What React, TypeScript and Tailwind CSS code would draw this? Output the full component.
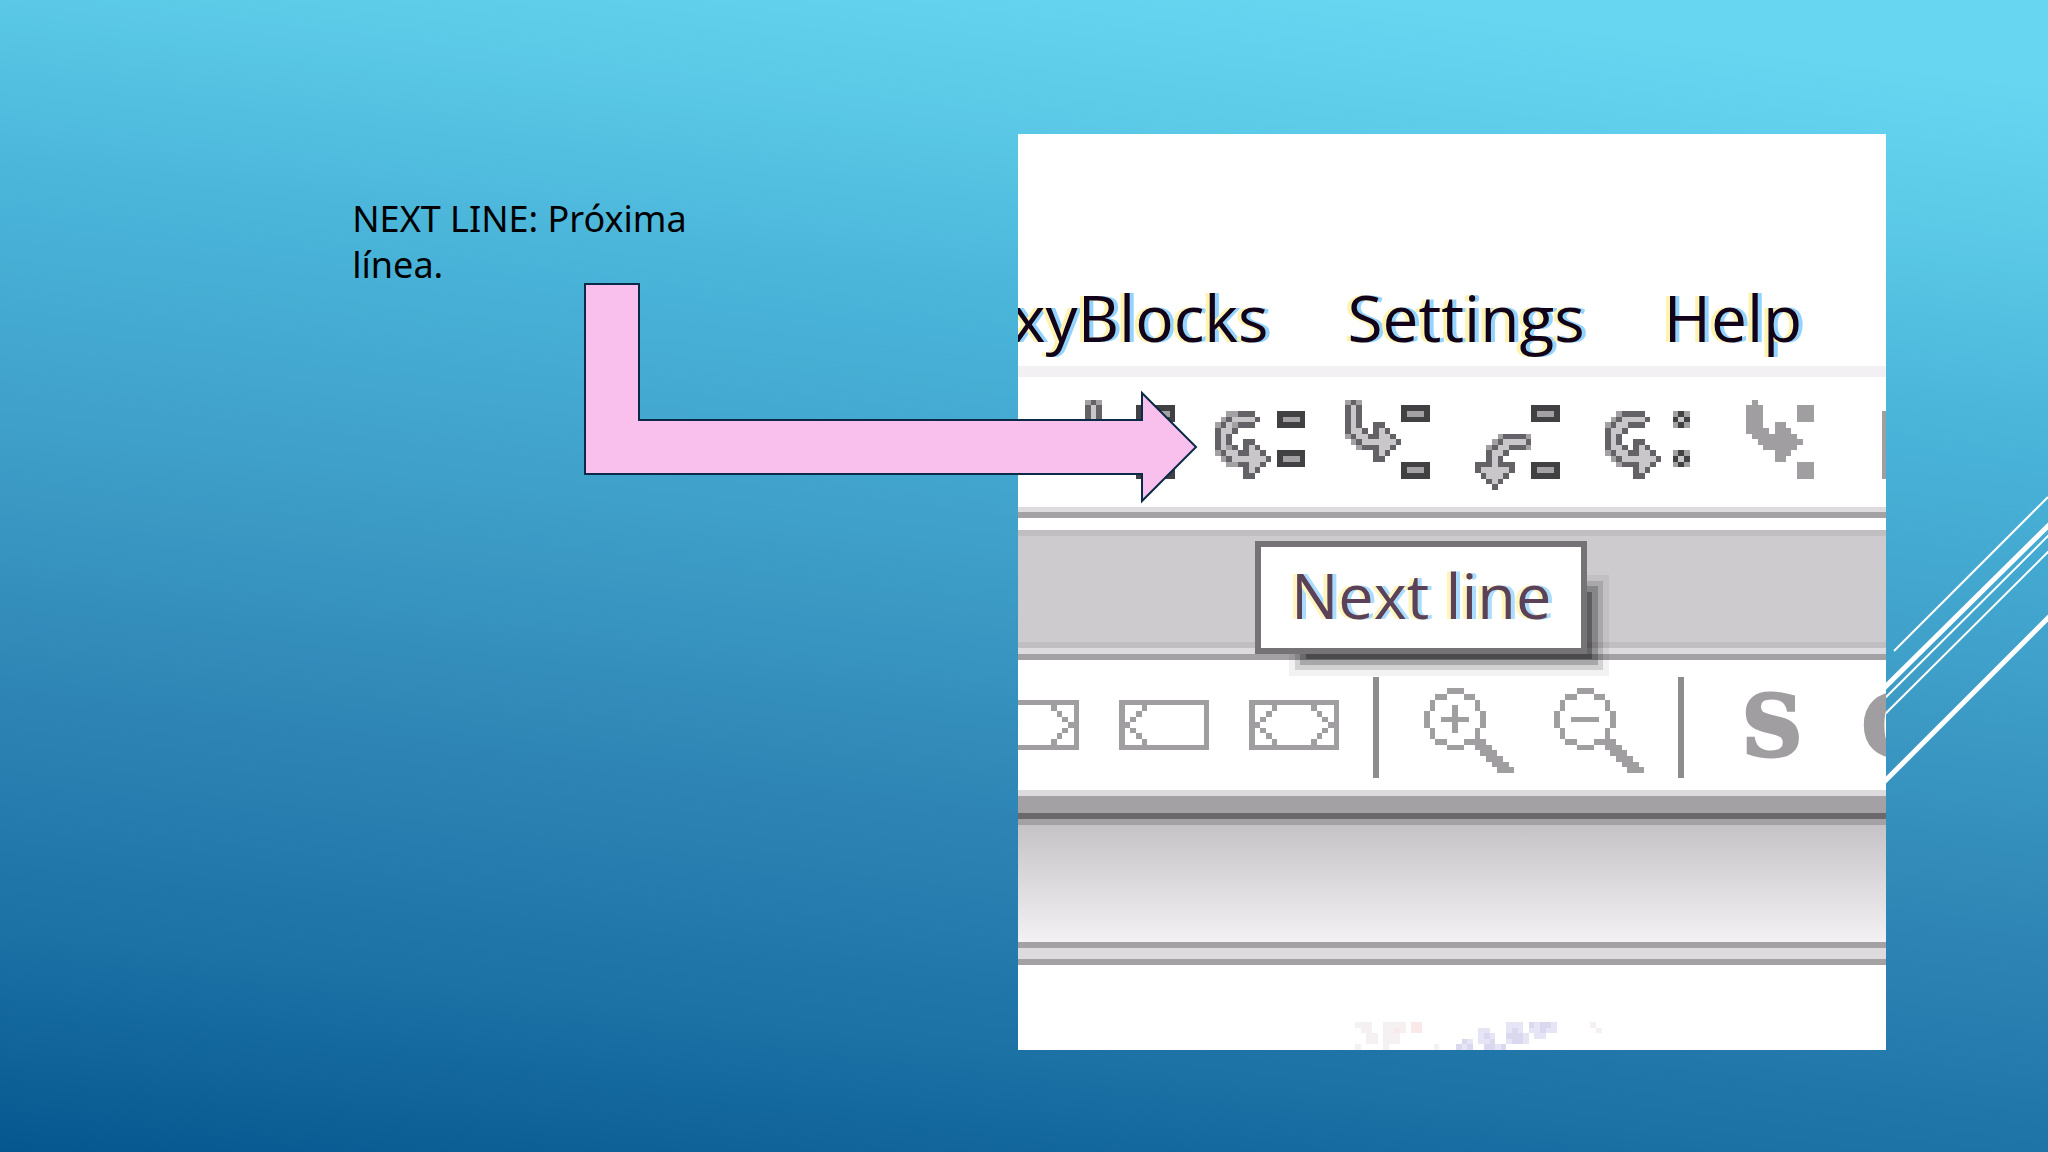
import type { ReactNode } from 'react';

// One character is one pixel of the enlarged toolbar bitmaps
const COLORS: Record<string, string> = {
  D: '#646266',
  L: '#c9c7ca',
  m: '#a3a1a4',
  K: '#414043',
  g: '#a09ea1',
  a: '#f5f1f2',
  b: '#fbe9ea',
  c: '#e6e5f5',
  d: '#dad8ee',
};

const STEP_OVER = [
  '..mmDDD....KKKKK',
  '.mDLLLLD...KmmmK',
  'mDLmDDD....KKKKK',
  'DLLD............',
  'DLD.............',
  'DLD..DD.........',
  'DLmD.DLD........',
  'mDLLDDLLD..KKKKK',
  '.mDLLLLLLD.KmmmK',
  '..mmDDLLD..KKKKK',
  '.....DLD........',
  '.....DD.........',
];

const STEP_INTO = [
  'mDm............',
  'DLD.......KKKKK',
  'DLD.......KmmmK',
  'DLD.......KKKKK',
  'DLD..DD........',
  'DLLD.DLD.......',
  'mDLLDDLLD......',
  '.mDLLLLLLD.....',
  '..mDDDLLD......',
  '.....DLD.......',
  '.....DD........',
  '..........KKKKK',
  '..........KmmmK',
  '..........KKKKK',
];

const RUN_TO_CURSOR = [
  'mDm.............',
  'DLD......KKKKKKK',
  'DLD......KmmmmmK',
  'DLD......KKKKKKK',
  'DLD.............',
  'DLD.............',
  'DLD.............',
  'DLD.............',
  'DLD.............',
  'mDm.............',
  '................',
  '.........KKKKKKK',
  '.........KmmmmmK',
  '.........KKKKKKK',
];

const STEP_OUT = [
  '..........KKKKK',
  '..........KmmmK',
  '..........KKKKK',
  '...............',
  '...............',
  '....mDDDDm.....',
  '...mDLLLLD.....',
  '..mDLLDDDm.....',
  '..DLLD.........',
  '..DLD..........',
  'DDDLDDD...KKKKK',
  'DLLLLLD...KmmmK',
  '.DLLLD....KKKKK',
  '..DLD..........',
  '...D...........',
];

const NEXT_INSTRUCTION = [
  '..mDDDD.....mKm',
  '.mDLLLLD....KLK',
  'mDLLDDD.....mKm',
  'DLLD...........',
  'DLD............',
  'DLD..DD........',
  'DLLD.DLD.......',
  'mDLLDDLLD...mKm',
  '.mDLLLLLLD..KLK',
  '..mDDDLLD...mKm',
  '.....DLD.......',
  '.....DD........',
];

const STEP_INTO_INSTRUCTION = [
  '.g..........',
  'ggg......ggg',
  'ggg......ggg',
  'ggg......ggg',
  'ggg..gg.....',
  'gggg.ggg....',
  '.gggggggg...',
  '..gggggggg..',
  '...gggggg...',
  '.....ggg....',
  '.....gg.....',
  '.........ggg',
  '.........ggg',
  '.........ggg',
];

const BREAK = Array(12).fill('gggggggggg') as string[];

const JUMP_FORWARD = [
  'gggggggggggggggg',
  'g..........g...g',
  'g...........g..g',
  'g............g.g',
  'g.............gg',
  'g............g.g',
  'g...........g..g',
  'g..........g...g',
  'gggggggggggggggg',
];

const JUMP_BACK = [
  'gggggggggggggggg',
  'g...g..........g',
  'g..g...........g',
  'g.g............g',
  'gg.............g',
  'g.g............g',
  'g..g...........g',
  'g...g..........g',
  'gggggggggggggggg',
];

const JUMP_BOTH = [
  'gggggggggggggggg',
  'g...g......g...g',
  'g..g........g..g',
  'g.g..........g.g',
  'gg............gg',
  'g.g..........g.g',
  'g..g........g..g',
  'g...g......g...g',
  'gggggggggggggggg',
];

const ZOOM_IN = [
  '....ggg.........',
  '..gg...gg.......',
  '.g.......g......',
  '.g...g...g......',
  'g....g....g.....',
  'g..ggggg..g.....',
  'g....g....g.....',
  '.g...g...g......',
  '.g.......g......',
  '..gg...gggg.....',
  '....ggg..ggg....',
  '..........ggg...',
  '...........ggg..',
  '............ggg.',
  '.............ggg',
];

const ZOOM_OUT = [
  '....ggg.........',
  '..gg...gg.......',
  '.g.......g......',
  '.g.......g......',
  'g.........g.....',
  'g..ggggg..g.....',
  'g.........g.....',
  '.g.......g......',
  '.g.......g......',
  '..gg...gggg.....',
  '....ggg..ggg....',
  '..........ggg...',
  '...........ggg..',
  '............ggg.',
  '.............ggg',
];

const LOGO_TOP = [
  'aaa..aaaa.bb...............ccc.dcddc......a...',
  '.aa..aaba.bb..........cc...cdc.ccdcc.......a..',
  '..aa.aaa..............cdc..dddc.cc............',
  '..aa.aaa...........dc.ccd..cddc...............',
  'a....a........a...dcd..ddcd...................',
];

function Pixels({ rows, x = 0, y = 0 }: { rows: string[]; x?: number; y?: number }) {
  return (
    <>
      {rows.map((row, r) =>
        [...row.matchAll(/([^.])\1*/g)].map((run) => (
          <rect
            key={`${r}-${run.index}`}
            x={x + run.index}
            y={y + r}
            width={run[0].length}
            height={1}
            fill={COLORS[run[1]]}
          />
        ))
      )}
    </>
  );
}

function ToolButton({ label, rows, x = 3, y }: { label: string; rows: string[]; x?: number; y: number }) {
  return (
    <button type="button" aria-label={label} className="size-[130px] shrink-0">
      <svg viewBox="0 0 23 23" shapeRendering="crispEdges" className="size-full">
        <Pixels rows={rows} x={x} y={y} />
      </svg>
    </button>
  );
}

function LetterButton({ label, children, className }: { label: string; children: ReactNode; className: string }) {
  return (
    <button
      type="button"
      aria-label={label}
      className={`h-[130px] w-[130px] shrink-0 pt-1 text-left font-['DejaVu_Serif',serif] text-[84px] leading-[126px] font-bold text-[#a09ea1] [-webkit-text-stroke:3px_#a09ea1] ${className}`}
    >
      {children}
    </button>
  );
}

function MenuButton({ children }: { children: ReactNode }) {
  return (
    <button type="button" className="[text-shadow:-4px_0_0_#fff3b0,4px_0_0_#92d4ff]">
      {children}
    </button>
  );
}

function Separator() {
  return (
    <div className="w-[45px] shrink-0 self-stretch pt-[17px] pb-[12px] pl-[11px]">
      <div className="h-full w-[6px] bg-[#8e8c8f]" />
    </div>
  );
}

function MenuBar() {
  return (
    <nav className="flex h-[243px] items-end justify-end gap-[79px] overflow-hidden border-b-[11px] border-[#f2f0f2] pr-[84px] pb-1 font-['Open_Sans',sans-serif] text-[64px] leading-[88px] text-[#12021a]">
      <MenuButton>xyBlocks</MenuButton>
      <MenuButton>Settings</MenuButton>
      <MenuButton>Help</MenuButton>
    </nav>
  );
}

function Screenshot() {
  return (
    <section className="w-[42.4%] overflow-hidden bg-white">
      <MenuBar />

      {/* Debugger toolbar */}
      <div className="flex overflow-hidden pl-[50px]">
        <ToolButton label="Run to cursor" rows={RUN_TO_CURSOR} y={4} />
        <ToolButton label="Next line" rows={STEP_OVER} y={6} />
        <ToolButton label="Step into" rows={STEP_INTO} y={4} />
        <ToolButton label="Step out" rows={STEP_OUT} y={5} />
        <ToolButton label="Next instruction" rows={NEXT_INSTRUCTION} y={6} />
        <ToolButton label="Step into instruction" rows={STEP_INTO_INSTRUCTION} x={5} y={4} />
        <ToolButton label="Break debugger" rows={BREAK} x={6} y={6} />
      </div>
      <div className="h-[11px] border-b-[6px] border-[#a3a1a4] bg-[#dddbdd]" />

      {/* Empty band with the tooltip over it */}
      <div className="relative mt-3 h-[118px] border-y-[6px] border-[#c0bec1] bg-[#cdcbce]">
        <div
          role="tooltip"
          className="absolute top-[5px] left-[27.3%] z-10 border-[6px] border-[#757376] bg-white px-[30px] pb-[6px] font-['Open_Sans',sans-serif] text-[63px] leading-[95px] whitespace-nowrap text-[#5c4258] shadow-[28px_28px_0_-23px_rgba(0,0,0,0.3),28px_28px_0_-17px_rgba(0,0,0,0.2),28px_28px_0_-12px_rgba(0,0,0,0.13),28px_28px_0_-6px_rgba(0,0,0,0.05)] [text-shadow:-4px_0_0_#fff5bd,4px_0_0_#a9dcff]"
        >
          Next line
        </div>
      </div>
      <div className="h-3 border-b-[6px] border-[#a3a1a4] bg-[#dddbdd]" />

      {/* Block toolbar, scrolled past its first button */}
      <div className="-ml-[46px] flex overflow-hidden">
        <ToolButton label="Jump forward" rows={JUMP_FORWARD} y={7} />
        <ToolButton label="Jump back" rows={JUMP_BACK} y={7} />
        <ToolButton label="Jump both ways" rows={JUMP_BOTH} y={7} />
        <Separator />
        <ToolButton label="Zoom in" rows={ZOOM_IN} y={5} />
        <ToolButton label="Zoom out" rows={ZOOM_OUT} y={5} />
        <Separator />
        <LetterButton label="Source" className="pl-[30px]">S</LetterButton>
        <LetterButton label="Comments" className="pl-[20px]">C</LetterButton>
      </div>

      {/* Editor frame */}
      <div className="h-[23px] border-t-[6px] border-[#dddbdd] bg-[#a3a1a4]" />
      <div className="h-3 border-t-[6px] border-[#6a686b] bg-[#a3a1a4]" />
      <div className="h-[117px] bg-linear-to-b from-[#c5c3c6] to-[#f3f1f3]" />
      <div className="h-[23px] border-y-[6px] border-[#a3a1a4] bg-[#dddbdd]" />
      <div className="pt-[57px] pl-[336px]">
        <svg viewBox="0 0 46 5" shapeRendering="crispEdges" className="h-[28px] w-[260px]">
          <Pixels rows={LOGO_TOP} />
        </svg>
      </div>
    </section>
  );
}

export default function App() {
  return (
    <main className="relative min-h-screen overflow-hidden bg-[linear-gradient(187deg,#66d6f1_6%,#5ccbe8_16%,#4ab4d9_31%,#3fa0c9_48%,#3189b8_64%,#1c71a5_84%,#04588f_100%)]">
      {/* Diagonal strokes at the slide's edge */}
      <svg viewBox="0 0 2048 1152" preserveAspectRatio="none" className="absolute inset-0 size-full" stroke="#fff">
        <path d="M1894 651L2048 497" strokeWidth="2" />
        <path d="M1870 702L2058 516" strokeWidth="5" />
        <path d="M1870 713L2058 526" strokeWidth="2" />
        <path d="M1870 729L2058 542" strokeWidth="2" />
        <path d="M1870 796L2058 608" strokeWidth="5" />
      </svg>

      <div className="relative flex items-start pt-[134px]">
        <div className="w-[49.7%] pt-[62px] pl-[17.2%]">
          <p className="max-w-[360px] font-['Noto_Sans',sans-serif] text-[36px] leading-[46px] text-black">
            NEXT LINE: Próxima línea.
          </p>
        </div>
        <Screenshot />
      </div>

      {/* Arrow from the note to the button */}
      <svg viewBox="0 0 2048 1152" preserveAspectRatio="none" className="pointer-events-none absolute inset-0 z-20 size-full">
        <path
          d="M585 284H639V420H1142V393L1196 447L1142 501V474H585Z"
          fill="#fac0ed"
          stroke="#0b2a47"
          strokeWidth="2"
        />
      </svg>
    </main>
  );
}
